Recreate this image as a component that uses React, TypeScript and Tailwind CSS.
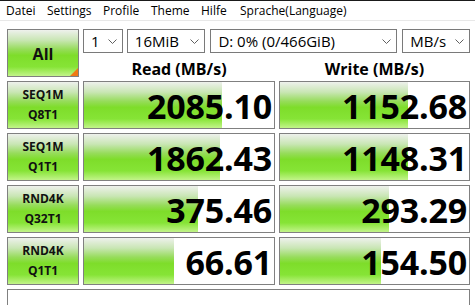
import React from "react";

const green =
  "bg-[linear-gradient(to_bottom,#eef1ec_0%,#c9e6b4_22%,#96dc5a_42%,#7edd2a_55%,#86e436_80%,#c2f48a_100%)]";

const font = "font-['Open_Sans','Noto_Sans',sans-serif]";

function Chevron() {
  return (
    <svg width="9" height="5" viewBox="0 0 9 5" className="shrink-0">
      <path d="M0.5 0.5 L4.5 4.5 L8.5 0.5" fill="none" stroke="#606060" strokeWidth="1" />
    </svg>
  );
}

function Combo({ w, text }: { w: string; text: string }) {
  return (
    <div
      className={`${w} h-[24px] border border-[#7a7a7a] bg-white flex items-center justify-between pl-[7px] pr-[5px] text-[15px] leading-[22px] text-black`}
    >
      <span className="whitespace-nowrap">{text}</span>
      <Chevron />
    </div>
  );
}

function Cell({ value, pct }: { value: string; pct: number }) {
  return (
    <div className="relative h-[48px] border border-[#808080] bg-white overflow-hidden">
      <div className={`absolute left-0 top-0 bottom-0 ${green}`} style={{ width: `${pct}px` }} />
      <div className="relative h-full flex items-center justify-end pr-[2px] pt-[2px] text-[34px] font-bold leading-none text-black tracking-[-0.2px]">
        {value}
      </div>
    </div>
  );
}

function Label({ a, b }: { a: string; b: string }) {
  return (
    <div
      className={`h-[48px] border border-[#808080] ${green} flex flex-col items-center justify-center text-[12px] font-bold leading-[20px] text-[#111]`}
    >
      <span>{a}</span>
      <span>{b}</span>
    </div>
  );
}

const rows = [
  { a: "SEQ1M", b: "Q8T1", r: "2085.10", rw: 138, w: "1152.68", ww: 128 },
  { a: "SEQ1M", b: "Q1T1", r: "1862.43", rw: 136, w: "1148.31", ww: 128 },
  { a: "RND4K", b: "Q32T1", r: "375.46", rw: 114, w: "293.29", ww: 109 },
  { a: "RND4K", b: "Q1T1", r: "66.61", rw: 90, w: "154.50", ww: 101 },
];

export default function App() {
  const menu: [string, string][] = [
    ["Datei", "w-[41px]"],
    ["Settings", "w-[56px]"],
    ["Profile", "w-[48px]"],
    ["Theme", "w-[50px]"],
    ["Hilfe", "w-[39px]"],
    ["Sprache(Language)", "w-[120px]"],
  ];
  return (
    <div className={`w-[475px] h-[305px] overflow-hidden bg-white ${font}`}>
      <div className="h-[21px] border-t border-[#1a1a1a] border-b border-b-[#e8e8e8] flex items-center pl-[6px] text-[12px] leading-[19px] text-black">
        {menu.map(([t, w]) => (
          <span key={t} className={`${w} whitespace-nowrap`}>
            {t}
          </span>
        ))}
      </div>
      <div className="pl-[7px] pt-[8px]">
        <div className="grid grid-cols-[72px_192px_191px] gap-x-[4px] gap-y-[4px]">
          <div className={`relative h-[48px] border border-[#808080] ${green} flex items-center justify-center text-[16px] font-bold text-[#111] pt-[2px]`}>
            All
            <div className="absolute right-0 bottom-0 w-0 h-0 border-l-[8px] border-l-transparent border-b-[8px] border-b-[#f07a14]" />
          </div>
          <div className="col-span-2 flex flex-col">
            <div className="flex">
              <Combo w="w-[40px]" text="1" />
              <div className="w-[4px]" />
              <Combo w="w-[79px]" text="16MiB" />
              <div className="w-[5px]" />
              <Combo w="w-[188px]" text="D: 0% (0/466GiB)" />
              <div className="w-[5px]" />
              <Combo w="w-[68px]" text="MB/s" />
            </div>
            <div className="grid grid-cols-[192px_191px] gap-x-[4px] h-[24px] pt-[8px] text-[16px] font-bold leading-[16px] text-black">
              <div className="text-center">Read (MB/s)</div>
              <div className="text-center">Write (MB/s)</div>
            </div>
          </div>
          {rows.map((r, i) => (
            <React.Fragment key={i}>
              <Label a={r.a} b={r.b} />
              <Cell value={r.r} pct={r.rw} />
              <Cell value={r.w} pct={r.ww} />
            </React.Fragment>
          ))}
          <div className="col-span-3 h-[30px] border border-[#808080] bg-white" />
        </div>
      </div>
    </div>
  );
}
